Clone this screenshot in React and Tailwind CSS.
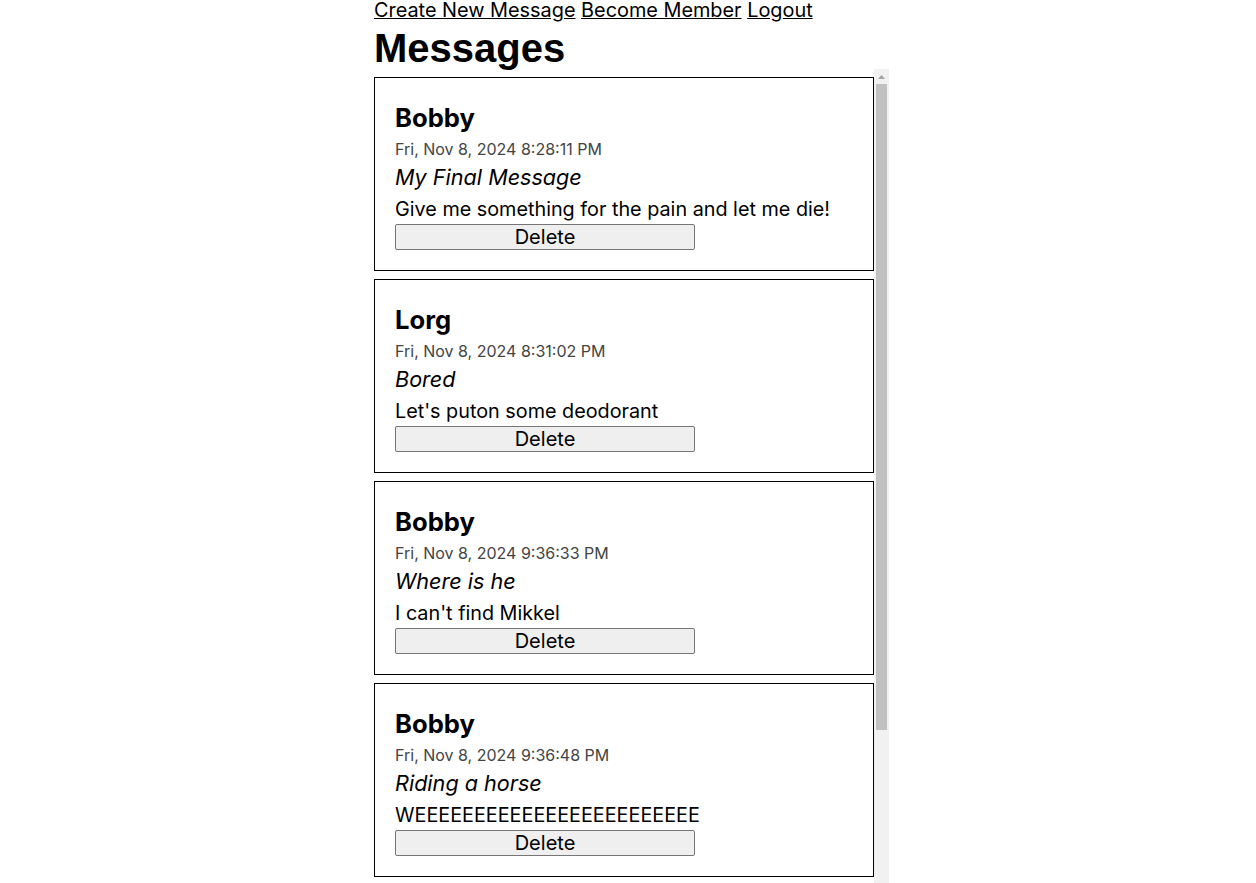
import React from "react";

const messages = [
  { user: "Bobby", date: "Fri, Nov 8, 2024 8:28:11 PM", title: "My Final Message", body: "Give me something for the pain and let me die!" },
  { user: "Lorg", date: "Fri, Nov 8, 2024 8:31:02 PM", title: "Bored", body: "Let's puton some deodorant" },
  { user: "Bobby", date: "Fri, Nov 8, 2024 9:36:33 PM", title: "Where is he", body: "I can't find Mikkel" },
  { user: "Bobby", date: "Fri, Nov 8, 2024 9:36:48 PM", title: "Riding a horse", body: "WEEEEEEEEEEEEEEEEEEEEEEEE" },
];

function Card({ m }) {
  return (
    <div className="w-[500px] shrink-0 border border-black px-[20px] pt-[20px] pb-[20px] flex flex-col items-start">
      <h2 className="text-[25.6px] font-bold leading-[30px] mt-[5px]">{m.user}</h2>
      <div className="text-[16px] leading-[19px] mt-[7px] text-[#444]">{m.date}</div>
      <div className="text-[21.6px] italic leading-[27px] mt-[5px]">{m.title}</div>
      <p className="text-[19.8px] leading-[24px] mt-[6px]">{m.body}</p>
      <button className="mt-[3px] w-[300px] h-[26px] bg-[#efefef] border border-[#767676] rounded-[2px] text-[20px] leading-[24px] text-black flex items-center justify-center">
        Delete
      </button>
    </div>
  );
}

export default function App() {
  return (
    <div className="bg-white text-black" style={{ fontFamily: "Inter, 'Noto Sans', sans-serif" }}>
      <div className="mx-auto w-[508px]">
        <nav className="text-[19.86px] leading-[20px] whitespace-nowrap">
          <a href="#" className="underline">Create New Message</a>{" "}
          <a href="#" className="underline">Become Member</a>{" "}
          <a href="#" className="underline">Logout</a>
        </nav>
        <h1
          className="text-[40px] font-bold leading-[40px] mt-[8px] mb-[1px]"
          style={{ fontFamily: "'Liberation Sans', Arial, sans-serif" }}
        >
          Messages
        </h1>
        <div className="w-[515px] h-[814px] flex">
          <div className="w-[500px] h-full overflow-hidden flex flex-col gap-[8px] pt-[8px]">
            {messages.map((m, i) => (
              <Card key={i} m={m} />
            ))}
          </div>
          <div className="w-[15px] h-full bg-[#f1f1f1] flex flex-col items-center">
            <div className="h-[15px] w-full flex items-center justify-center">
              <svg width="7" height="4" viewBox="0 0 7 4">
                <polygon points="3.5,0 7,4 0,4" fill="#a3a3a3" />
              </svg>
            </div>
            <div className="w-[11px] h-[646px] bg-[#c1c1c1]" />
          </div>
        </div>
      </div>
    </div>
  );
}
